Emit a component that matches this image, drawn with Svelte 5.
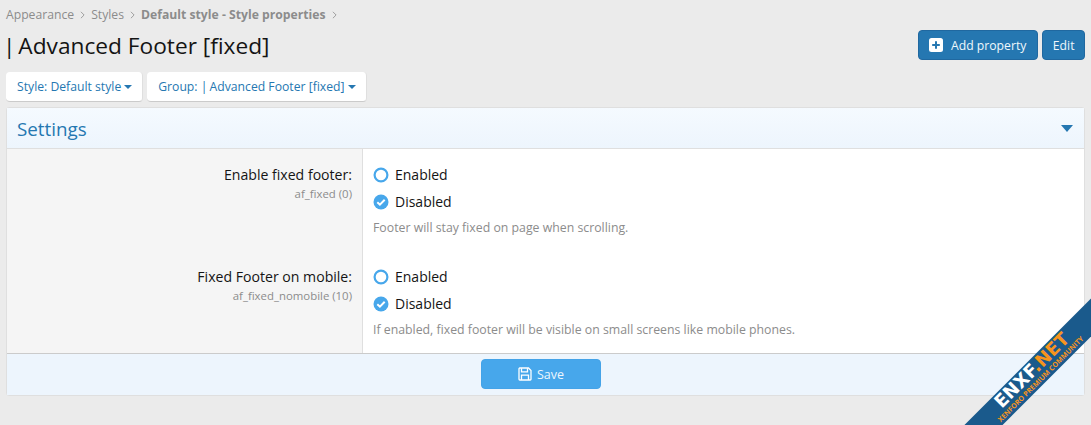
<script>
	// ---- data ----
	const crumbs = [
		{ label: 'Appearance' },
		{ label: 'Styles' },
		{ label: 'Default style - Style properties', bold: true }
	];
	const rows = [
		{
			label: 'Enable fixed footer:',
			hint: 'af_fixed (0)',
			explain: 'Footer will stay fixed on page when scrolling.'
		},
		{
			label: 'Fixed Footer on mobile:',
			hint: 'af_fixed_nomobile (10)',
			explain: 'If enabled, fixed footer will be visible on small screens like mobile phones.'
		}
	];
</script>

<div class="page">
	<nav class="crumbs">
		{#each crumbs as crumb}
			<span class:bold={crumb.bold}>{crumb.label}</span>
			<svg class="chev" viewBox="0 0 6 10" width="5" height="8"><path d="M1 1l4 4-4 4" fill="none" stroke="currentColor" stroke-width="1" /></svg>
		{/each}
	</nav>

	<header class="head">
		<h1><span class="pipe">|</span> Advanced Footer [fixed]</h1>
		<div class="actions">
			<button type="button" class="btn add">
				<svg viewBox="0 0 14 14" width="14" height="14">
					<rect width="14" height="14" rx="2.5" fill="#fff" />
					<path d="M7 3.2v7.6M3.2 7h7.6" stroke="#2577b1" stroke-width="2" />
				</svg>
				Add property
			</button>
			<button type="button" class="btn edit">Edit</button>
		</div>
	</header>

	<div class="filters">
		<button type="button" class="filter">Style: Default style <i class="caret"></i></button>
		<button type="button" class="filter"><span>Group: <span class="pipe-sm">|</span> Advanced Footer [fixed]</span> <i class="caret"></i></button>
	</div>

	<section class="block">
		<div class="block-head">
			<h2>Settings</h2>
			<i class="caret big"></i>
		</div>
		{#each rows as row}
			<div class="row">
				<div class="label">
					<div class="name">{row.label}</div>
					<div class="hint">{row.hint}</div>
				</div>
				<div class="field">
					<div class="radio">
						<svg viewBox="0 0 16 16" width="16" height="16"><circle cx="8" cy="8" r="6.4" fill="#fff" stroke="#47a7eb" stroke-width="2.2" /></svg>
						Enabled
					</div>
					<div class="radio">
						<svg viewBox="0 0 16 16" width="16" height="16">
							<circle cx="8" cy="8" r="7.5" fill="#47a7eb" />
							<path d="M4.3 8.2l2.6 2.5 4.8-4.9" fill="none" stroke="#fff" stroke-width="2" />
						</svg>
						Disabled
					</div>
					<div class="explain">{row.explain}</div>
				</div>
			</div>
		{/each}
		<div class="block-foot">
			<button type="button" class="save">
				<svg viewBox="0 0 14 14" width="14" height="14">
					<path d="M1.5 1h9l2.5 2.5v8.7a.8.8 0 0 1-.8.8H1.8a.8.8 0 0 1-.8-.8V1.8a.8.8 0 0 1 .5-.8z" fill="none" stroke="#fff" stroke-width="1.3" />
					<path d="M3.5 1.2v3.6h6V1.2M3.5 13V8.2h7V13" fill="none" stroke="#fff" stroke-width="1.3" />
				</svg>
				Save
			</button>
		</div>
	</section>

	<div class="ribbon" aria-hidden="true">
		<div class="ribbon-main"><span>ENXF</span><em>.NET</em></div>
		<div class="ribbon-sub">XENFORO PREMIUM COMMUNITY</div>
	</div>
</div>

<style>
	:global(body) {
		margin: 0;
		background: #ebebeb;
		font-family: "Open Sans", "Noto Sans", sans-serif;
		overflow: hidden;
	}
	.page {
		position: relative;
		box-sizing: border-box;
		height: 425px;
		padding: 6px 6px 0;
		overflow: hidden;
		color: #141414;
		font-size: 14px;
	}
	.crumbs {
		display: flex;
		align-items: center;
		gap: 6px;
		height: 17px;
		font-size: 12.2px;
		color: #8c8c8c;
	}
	.bold {
		font-weight: 700;
	}
	.chev {
		color: #8c8c8c;
	}
	.head {
		display: flex;
		justify-content: space-between;
		align-items: flex-start;
		margin-top: 7px;
	}
	h1 {
		margin: 0;
		font-size: 22.7px;
		font-weight: 400;
		line-height: 31px;
	}
	.pipe {
		margin-left: -3px;
		letter-spacing: -3px;
	}
	.pipe-sm {
		letter-spacing: -1px;
	}
	.actions {
		display: flex;
		gap: 4px;
		align-items: flex-start;
	}
	.btn {
		display: inline-flex;
		align-items: center;
		gap: 8px;
		box-sizing: border-box;
		height: 30px;
		padding: 0 10px;
		font: inherit;
		font-size: 12.2px;
		color: #f0f7fc;
		background: #2577b1;
		border-radius: 4px;
		border: 1px solid #2068a0;
	}
	.add {
		padding-right: 11px;
	}
	.edit {
		padding: 0 9.5px;
	}
	.filters {
		display: flex;
		gap: 4px;
		margin-top: 11px;
	}
	.filter {
		display: inline-flex;
		align-items: center;
		gap: 3px;
		box-sizing: border-box;
		height: 30px;
		padding: 0 10px 0 11px;
		font: inherit;
		font-size: 12.2px;
		color: #2577b1;
		background: #fff;
		border: 0;
		border-bottom: 1px solid #cbcbcb;
		border-right: 1px solid #dfdfdf;
		border-radius: 4px;
	}
	.caret {
		display: inline-block;
		width: 0;
		height: 0;
		border: 4px solid transparent;
		border-top: 4px solid #2577b1;
		border-bottom: 0;
	}
	.caret.big {
		border-width: 7px 6px 0;
	}
	.block {
		margin-top: 5px;
		background: #fff;
		border: 1px solid #dfdfdf;
		border-radius: 3px;
	}
	.block-head {
		display: flex;
		justify-content: space-between;
		align-items: center;
		height: 40px;
		padding: 0 11px 0 10px;
		background: linear-gradient(#f5faff, #edf5fd);
		border-bottom: 1px solid #dfdfdf;
	}
	h2 {
		margin: 0;
		padding-top: 1px;
		font-size: 18.8px;
		font-weight: 400;
		color: #2577b1;
	}
	.row {
		display: grid;
		grid-template-columns: 356px 1fr;
	}
	.label {
		box-sizing: border-box;
		padding: 16px 10px 0 0;
		text-align: right;
		background: #f5f5f5;
		border-right: 1px solid #dfdfdf;
	}
	.name {
		font-size: 14.1px;
		line-height: 20px;
	}
	.hint {
		font-size: 11.4px;
		line-height: 17px;
		color: #8c8c8c;
	}
	.field {
		padding: 12px 10px 0;
		height: 90px;
	}
	.radio {
		display: flex;
		align-items: center;
		gap: 6px;
		height: 27px;
	}
	.explain {
		margin-top: 4px;
		font-size: 12.3px;
		line-height: 17px;
		color: #8c8c8c;
	}
	.block-foot {
		display: flex;
		justify-content: center;
		align-items: flex-start;
		box-sizing: border-box;
		height: 42px;
		padding: 5px 9px 0 0;
		background: #edf5fd;
		border-top: 1px solid #cbcbcb;
	}
	.save {
		display: inline-flex;
		align-items: center;
		justify-content: center;
		gap: 5px;
		box-sizing: border-box;
		width: 120px;
		height: 30px;
		font: inherit;
		font-size: 12.5px;
		color: #edf6fd;
		background: #47a7eb;
		border: 1px solid #44a3e8;
		border-radius: 4px;
	}
	.ribbon {
		position: absolute;
		left: 925px;
		top: 360px;
		width: 220px;
		height: 27px;
		background: #1a5a8c;
		transform: rotate(-45deg);
		text-align: center;
		line-height: 1;
		white-space: nowrap;
	}
	.ribbon-main {
		font-family: "DejaVu Sans", sans-serif;
		font-size: 18px;
		line-height: 18px;
		font-weight: 700;
		color: #fff;
	}
	.ribbon-main em {
		font-style: normal;
		color: #f7941e;
	}
	.ribbon-sub {
		font-size: 7.1px;
		line-height: 7px;
		font-weight: 700;
		color: #f7941e;
	}
</style>
